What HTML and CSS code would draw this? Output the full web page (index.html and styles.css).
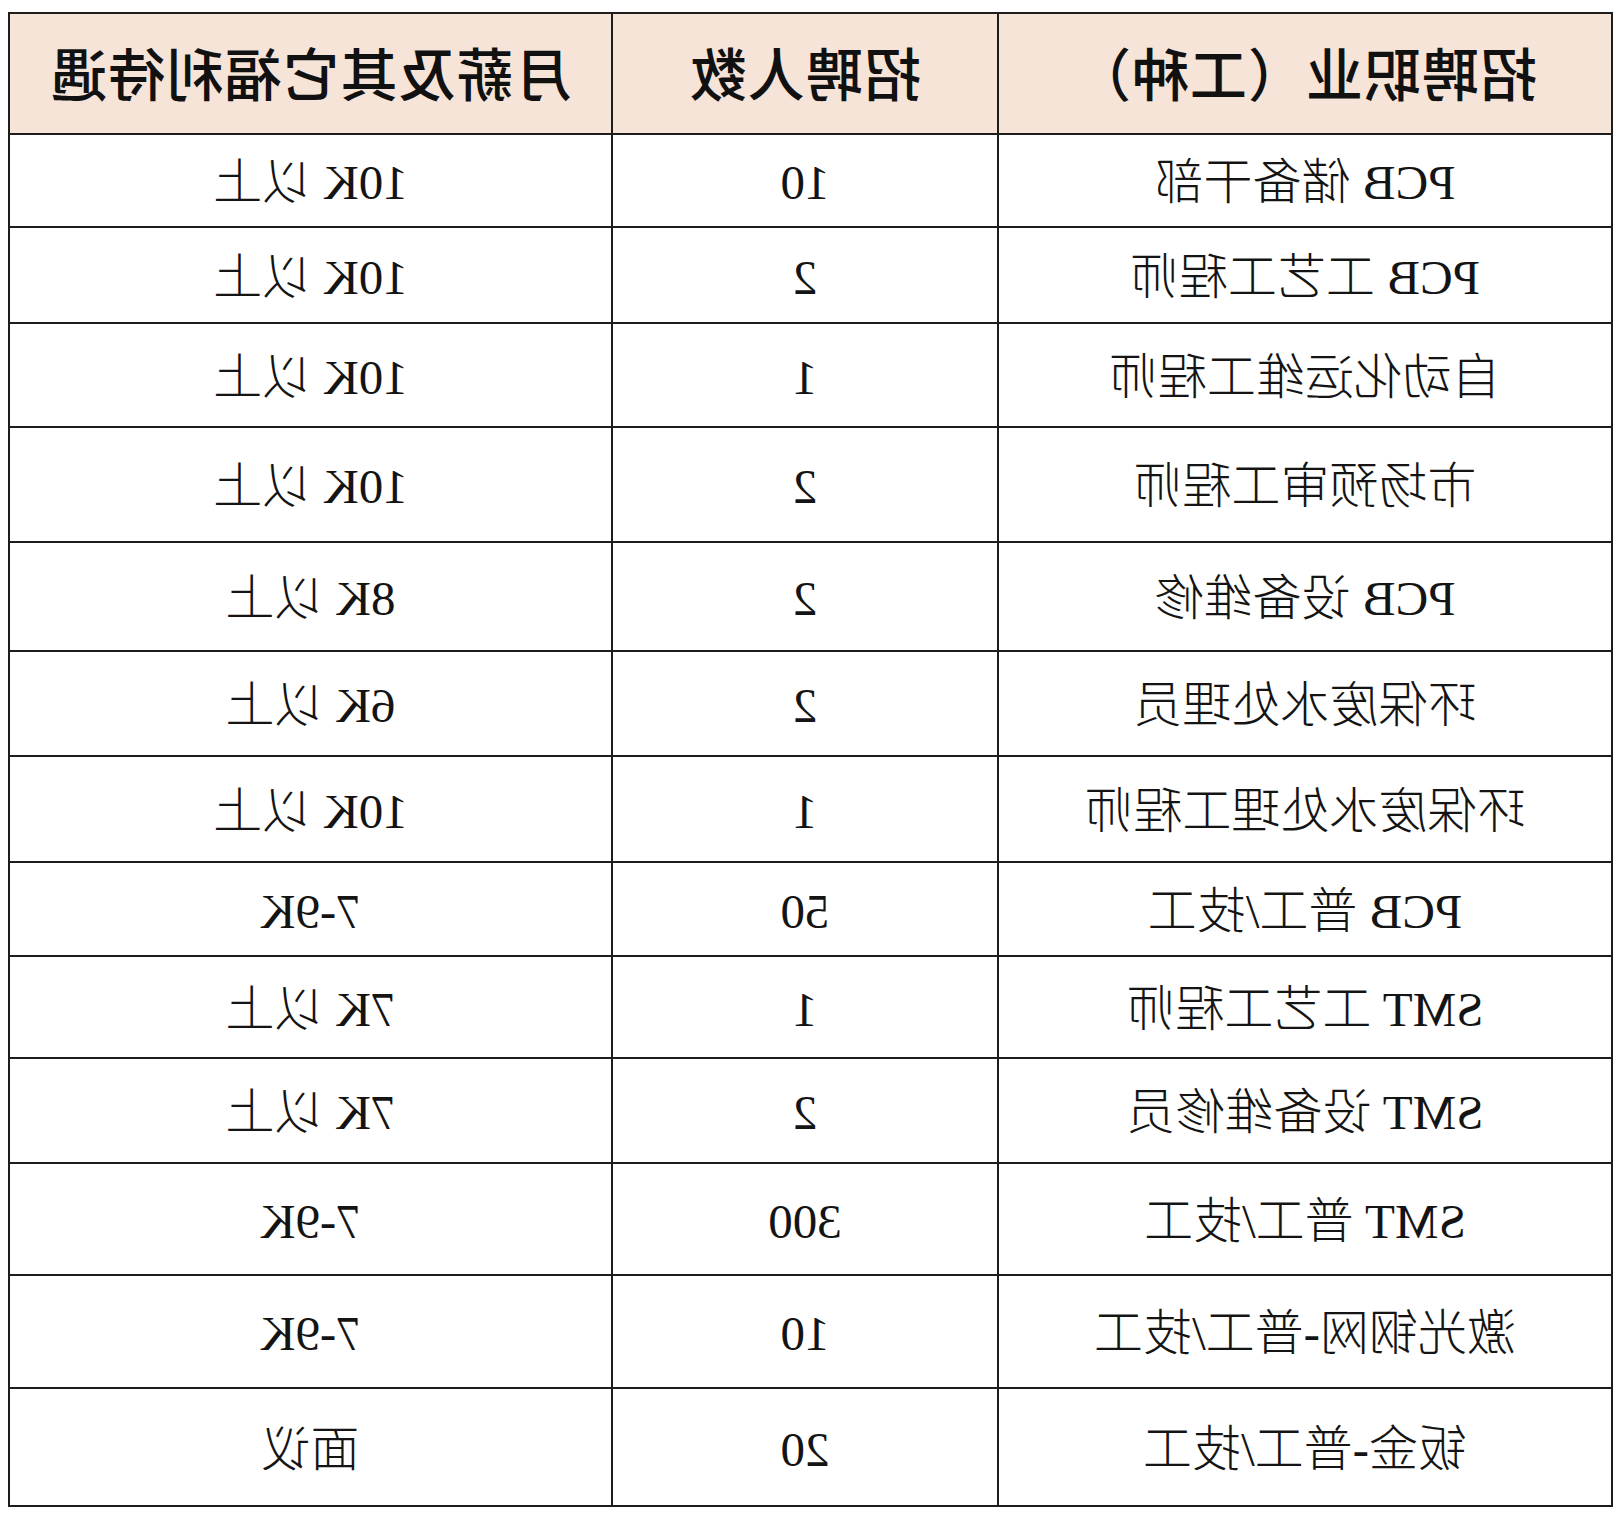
FILE: index.html
```html
<!DOCTYPE html>
<html lang="zh-CN">
<head>
<meta charset="utf-8">
<title>招聘职位表</title>
<link rel="stylesheet" href="styles.css">
</head>
<body>
<div class="sheet">
  <div class="table">
    <div class="cell head">招聘职业（工种）</div>
    <div class="cell head">招聘人数</div>
    <div class="cell head">月薪及其它福利待遇</div>

    <div class="cell">PCB 储备干部</div>
    <div class="cell">10</div>
    <div class="cell">10K 以上</div>

    <div class="cell">PCB 工艺工程师</div>
    <div class="cell">2</div>
    <div class="cell">10K 以上</div>

    <div class="cell">自动化运维工程师</div>
    <div class="cell">1</div>
    <div class="cell">10K 以上</div>

    <div class="cell">市场预审工程师</div>
    <div class="cell">2</div>
    <div class="cell">10K 以上</div>

    <div class="cell">PCB 设备维修</div>
    <div class="cell">2</div>
    <div class="cell">8K 以上</div>

    <div class="cell">环保废水处理员</div>
    <div class="cell">2</div>
    <div class="cell">6K 以上</div>

    <div class="cell">环保废水处理工程师</div>
    <div class="cell">1</div>
    <div class="cell">10K 以上</div>

    <div class="cell">PCB 普工/技工</div>
    <div class="cell">50</div>
    <div class="cell">7-9K</div>

    <div class="cell">SMT 工艺工程师</div>
    <div class="cell">1</div>
    <div class="cell">7K 以上</div>

    <div class="cell">SMT 设备维修员</div>
    <div class="cell">2</div>
    <div class="cell">7K 以上</div>

    <div class="cell">SMT 普工/技工</div>
    <div class="cell">300</div>
    <div class="cell">7-9K</div>

    <div class="cell">激光钢网-普工/技工</div>
    <div class="cell">10</div>
    <div class="cell">7-9K</div>

    <div class="cell">钣金-普工/技工</div>
    <div class="cell">20</div>
    <div class="cell">面议</div>
  </div>
</div>
</body>
</html>
```

FILE: styles.css
```css
html, body {
  margin: 0;
  padding: 0;
  background: #ffffff;
}

.sheet {
  padding: 12px 8px 6px 8px;
}

.table {
  display: grid;
  width: 1605px;
  grid-template-columns: 612px 384px 601px;
  grid-template-rows: 119px 91px 94px 102px 113px 107px 103px 104px 92px 100px 103px 110px 111px 116px;
  gap: 2px;
  padding: 2px;
  box-sizing: border-box;
  background: #1d1d1d;
  transform: scaleX(-1);
}

.cell {
  background: #ffffff;
  display: flex;
  align-items: center;
  justify-content: center;
  padding-top: 4px;
  color: #141414;
  font-family: "Liberation Serif", "Noto Sans CJK SC", serif;
  font-weight: 300;
  font-size: 49px;
  line-height: 1;
  white-space: nowrap;
}

.head {
  background: #f6e4d8;
  padding-top: 0;
  padding-bottom: 5px;
  color: #111111;
  font-family: "Noto Sans CJK SC", "Noto Sans", sans-serif;
  font-weight: 500;
  font-size: 57px;
  letter-spacing: 1px;
}
```
